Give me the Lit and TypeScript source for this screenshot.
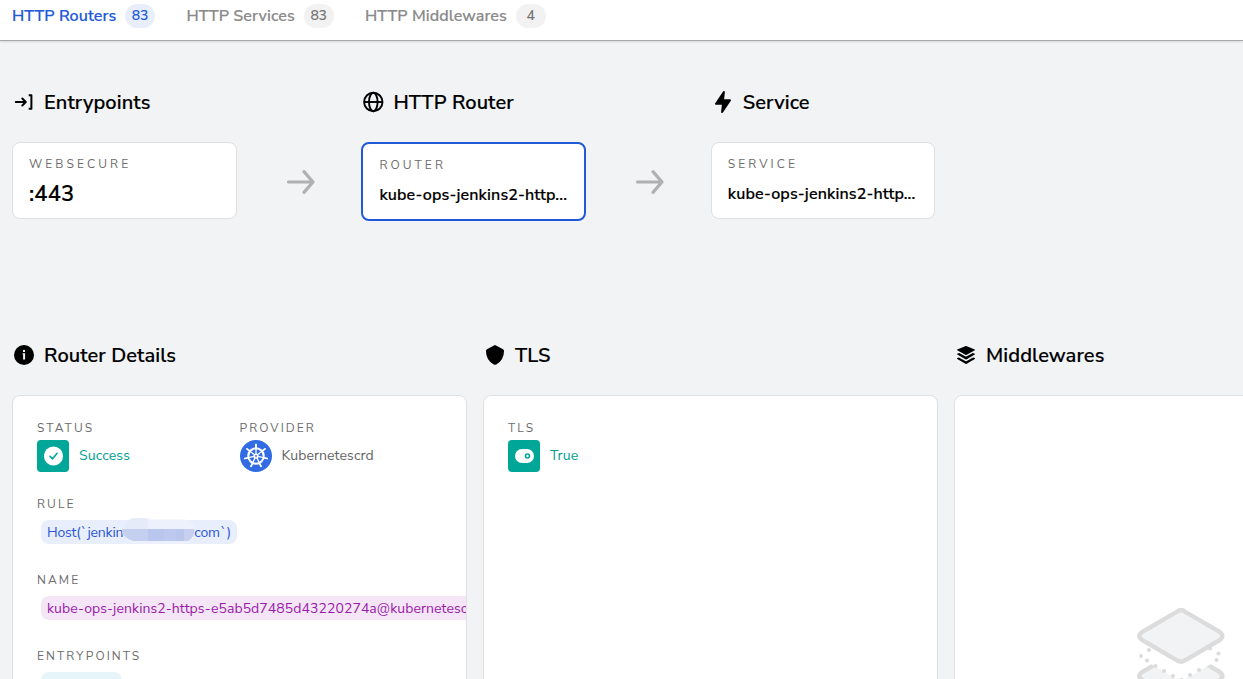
import { LitElement, html, svg, css } from "lit";
import { customElement, property } from "lit/decorators.js";

const eva = {
  flash: svg`<path d="M11.11 23a1 1 0 0 1-.34-.06 1 1 0 0 1-.65-1.05l.77-7.09H5a1 1 0 0 1-.83-1.56l7.89-11.8a1 1 0 0 1 1.17-.38 1 1 0 0 1 .65 1l-.77 7.14H19a1 1 0 0 1 .83 1.56l-7.89 11.8a1 1 0 0 1-.83.44z"/>`,
  info: svg`<circle cx="12" cy="12" r="10"/><g fill="#f1f3f5"><circle cx="12" cy="7.9" r="1.2"/><path d="M10.6 10.3H13.1V16.6H11.1V11.6H10.6Z"/></g>`,
  shield: svg`<path d="M12 21.85a2 2 0 0 1-1-.25l-.3-.17A15.17 15.17 0 0 1 3 8.23v-.14a2 2 0 0 1 1-1.75l7-3.94a2 2 0 0 1 2 0l7 3.94a2 2 0 0 1 1 1.75v.14a15.17 15.17 0 0 1-7.72 13.2l-.3.17a2 2 0 0 1-.98.25z"/>`,
  layers: svg`<path d="M3.24 7.29l8.52 4.63a.51.51 0 0 0 .48 0l8.52-4.63a.44.44 0 0 0-.05-.81L12.19 3a.5.5 0 0 0-.38 0L3.29 6.48a.44.44 0 0 0-.05.81z"/><path d="M20.71 10.66l-1.83-.78-6.64 3.61a.51.51 0 0 1-.48 0L5.12 9.88l-1.83.78a.48.48 0 0 0 0 .85l8.52 4.9a.46.46 0 0 0 .48 0l8.52-4.9a.48.48 0 0 0-.1-.85z"/><path d="M20.71 15.1l-1.56-.68-6.91 3.76a.51.51 0 0 1-.48 0l-6.91-3.76-1.56.68a.49.49 0 0 0 0 .87l8.52 5a.51.51 0 0 0 .48 0l8.52-5a.49.49 0 0 0-.1-.87z"/>`,
  entry: svg`<g fill="none" stroke="#000" stroke-width="2" stroke-linejoin="round"><path stroke-linecap="round" d="M3.8 12H13.4M10.3 8.5L13.8 12L10.3 15.5"/><path d="M16.7 5.3H19.4V18.7H16.7"/></g>`,
  globe: svg`<g fill="none" stroke="#000" stroke-width="1.9"><circle cx="12.3" cy="12" r="9.2"/><ellipse cx="12.3" cy="12" rx="4.3" ry="9.2"/><path d="M3 12H21.6"/></g>`,
};

@customElement("section-title")
class SectionTitle extends LitElement {
  @property() icon: keyof typeof eva = "info";
  static styles = css`
    :host { display: flex; align-items: center; gap: 8px; height: 24px; font-size: 20px; font-weight: 600; letter-spacing: .08px; color: #000; -webkit-text-stroke: .12px #000; white-space: nowrap; }
    svg { width: 24px; height: 24px; flex: none; }
  `;
  render() {
    return html`<svg viewBox="0 0 24 24">${eva[this.icon]}</svg><span><slot></slot></span>`;
  }
}

const arrow = html`<svg class="arrow" width="30" height="28" viewBox="0 0 30 28"><path d="M2.5 14H27M18 3.6L27 14L18 24.4" fill="none" stroke="#b0b0b0" stroke-width="3.2" stroke-linecap="round" stroke-linejoin="round"/></svg>`;

const spokes = [0, 1, 2, 3, 4, 5, 6].map((i) => (i * 360) / 7);
const helm = html`<svg width="32" height="32" viewBox="0 0 32 32">
  <circle cx="16" cy="16" r="16" fill="#326ce5"/>
  <g fill="none" stroke="#fff">
    <circle cx="16" cy="16" r="7.7" stroke-width="2.1"/>
    ${spokes.map((a) => svg`<path transform="rotate(${a} 16 16)" d="M16 14V4.2" stroke-width="1.3"/>`)}
    ${spokes.map((a) => svg`<path transform="rotate(${a} 16 16)" d="M16 7.4V4.4" stroke-width="1.6" stroke-linecap="round"/>`)}
  </g>
  <circle cx="16" cy="16" r="2.6" fill="#fff"/><circle cx="16" cy="16" r="0.9" fill="#326ce5"/>
</svg>`;

const check = html`<svg width="32" height="32" viewBox="0 0 32 32"><rect width="32" height="32" rx="4" fill="#00a697"/><circle cx="16.5" cy="16" r="9.6" fill="#fff"/><path d="M13 16.3L15.6 18.8L20.1 13.3" fill="none" stroke="#00a697" stroke-width="1.6" stroke-linecap="round" stroke-linejoin="round"/></svg>`;
const toggle = html`<svg width="32" height="32" viewBox="0 0 32 32"><rect width="32" height="32" rx="4" fill="#00a697"/><rect x="7" y="9" width="19" height="14" rx="7" fill="#fff"/><circle cx="19.5" cy="16" r="2" fill="none" stroke="#00a697" stroke-width="1.6"/></svg>`;

const mosaic = html`<svg class="mosaic" width="74" height="26" viewBox="0 0 74 26">
  <path d="M3 9Q5 0 12 0H24Q27 0 28 1.5H62Q73 3 73 14Q72 25 62 25.5H14Q2 24 0 14Z" fill="#edf1fb"/>
  <path d="M4 5Q7 0 14 0H24L26 2V11H2Z" fill="#e5ebf8"/>
  <path d="M0 11H26V23H12Q4 22 0 14Z" fill="#c5cff0"/>
  <path d="M26 11H62V23H26Z" fill="#b9c6ee"/><path d="M42 11H54V23H42Z" fill="#bdc9ef"/>
  <path d="M62 11H72.5Q73 19 66 23H62Z" fill="#c7d0f0"/>
</svg>`;

const diamond = "M40 5.3Q45 0.6 50 5.3L84 25.2Q89 29 84 32.8L50 52.8Q45 56.6 40 52.8L6 32.8Q0.5 29 6 25.2Z";
const dots = [[13, 43], [5, 49], [11, 53.5], [19.5, 59], [28, 64], [37, 69], [45.5, 73], [54, 68], [63, 63], [80.5, 53], [82.5, 46.5], [74, 41.5]];
const stack = html`<svg class="stack" width="90" height="102" viewBox="0 0 90 102">
  <g fill="#f1f3f5" stroke="#dcdcdc" stroke-width="4.4"><path d=${diamond} transform="translate(0 40)"/></g>
  <path d=${diamond} transform="translate(0 19)" fill="#fff"/>
  ${dots.map(([x, y]) => svg`<circle cx=${x} cy=${y} r="2.1" fill="#dcdcdc"/>`)}
  <path d=${diamond} fill="#f1f3f5" stroke="#dcdcdc" stroke-width="4.4"/>
</svg>`;

@customElement("app-root")
class AppRoot extends LitElement {
  static styles = css`
    :host { display: block; height: 679px; overflow: hidden; background: #f1f3f5; font-family: "Nunito Sans", Nunito, Lato, sans-serif; color: #000; }
    * { box-sizing: border-box; }
    svg { display: block; flex: none; }
    .tabs { display: flex; gap: 31.4px; height: 41px; padding: 4px 12px 0; background: #fff; border-bottom: 1px solid #a8a8a8; box-shadow: 0 1px 2px rgba(0,0,0,.12); }
    .tab { display: flex; align-items: center; gap: 8.8px; height: 24px; font-size: 16px; font-weight: 600; letter-spacing: .08px; color: #8a8a8a; -webkit-text-stroke: .15px currentColor; white-space: nowrap; }
    .count { width: 30px; height: 24px; line-height: 23px; border-radius: 12px; text-align: center; font-size: 14px; letter-spacing: -.2px; -webkit-text-stroke: 0; background: #f2f2f2; color: #757575; }
    .tab.active { color: #2159d8; }
    .active .count { background: #e8eefc; color: #2159d8; }
    .flow { display: grid; grid-template-columns: 224.7px 124.7px 224.7px 124.7px 224.3px; grid-template-rows: 24px 79px; row-gap: 28px; align-items: start; padding: 49px 0 0 12px; }
    .arrow { margin: 26px 0 0 49.4px; }
    .node { height: 77px; padding: 13px 16px 0; background: #fff; border: 1px solid #dfe0e2; border-radius: 8px; }
    .node.current { height: 79px; border: 2px solid #2159d8; }
    .kind { height: 16px; line-height: 16px; font-size: 12px; letter-spacing: 3.08px; color: #6c6c6c; }
    .name { margin-top: 10px; height: 24px; line-height: 24px; font-size: 16px; font-weight: 600; letter-spacing: .14px; -webkit-text-stroke: .15px #000; white-space: nowrap; }
    .name.port { font-size: 22px; }
    .details { display: grid; grid-template-columns: repeat(3, 455px); column-gap: 16px; row-gap: 28px; padding: 122px 0 0 12px; }
    .card { height: 300px; padding: 24px; overflow: hidden; background: #fff; border: 1px solid #dfe0e2; border-radius: 8px; }
    .pair { display: grid; grid-template-columns: 202.5px 1fr; }
    .label { height: 16px; line-height: 16px; font-size: 12px; letter-spacing: 2.08px; color: #6c6c6c; }
    .value { display: flex; align-items: center; gap: 10px; height: 32px; margin-top: 4px; font-size: 14px; letter-spacing: .09px; color: #636363; }
    .value span { padding-bottom: 2px; }
    .value.ok { color: #00a08f; letter-spacing: .14px; }
    .field { margin-top: 28px; }
    .pair + .field { margin-top: 24px; }
    .chip { display: flex; align-items: center; width: max-content; min-width: 81px; height: 24px; margin: 8px 0 0 4px; padding: 0 6px; border-radius: 8px; font-size: 14px; white-space: nowrap; }
    .chip.rule { background: #e8eefc; color: #2b56d6; letter-spacing: -.17px; }
    .chip.id { background: #f4e6f7; color: #9a1aa8; letter-spacing: .08px; }
    .chip.entry { background: #e6f5f9; color: #0d8aa8; }
    .mosaic { height: 26px; margin: -2px -2px 0 -1px; }
    .stack { margin: 187px auto 0; position: relative; left: -.5px; }
  `;

  render() {
    return html`
      <nav class="tabs">
        <div class="tab active">HTTP Routers<span class="count">83</span></div>
        <div class="tab">HTTP Services<span class="count">83</span></div>
        <div class="tab">HTTP Middlewares<span class="count">4</span></div>
      </nav>
      <section class="flow">
        <section-title icon="entry">Entrypoints</section-title><i></i>
        <section-title icon="globe">HTTP Router</section-title><i></i>
        <section-title icon="flash">Service</section-title>
        <div class="node"><div class="kind">WEBSECURE</div><div class="name port">:443</div></div>
        ${arrow}
        <div class="node current"><div class="kind">ROUTER</div><div class="name">kube-ops-jenkins2-http...</div></div>
        ${arrow}
        <div class="node"><div class="kind">SERVICE</div><div class="name">kube-ops-jenkins2-http...</div></div>
      </section>
      <section class="details">
        <section-title icon="info">Router Details</section-title>
        <section-title icon="shield">TLS</section-title>
        <section-title icon="layers">Middlewares</section-title>
        <div class="card">
          <div class="pair">
            <div><div class="label">STATUS</div><div class="value ok">${check}<span>Success</span></div></div>
            <div><div class="label">PROVIDER</div><div class="value">${helm}<span>Kubernetescrd</span></div></div>
          </div>
          <div class="field"><div class="label">RULE</div><div class="chip rule">Host(\`jenkin${mosaic}com\`)</div></div>
          <div class="field"><div class="label">NAME</div><div class="chip id">kube-ops-jenkins2-https-e5ab5d7485d43220274a@kubernetescrd</div></div>
          <div class="field"><div class="label">ENTRYPOINTS</div><div class="chip entry"></div></div>
        </div>
        <div class="card"><div class="label">TLS</div><div class="value ok">${toggle}<span>True</span></div></div>
        <div class="card">${stack}</div>
      </section>
    `;
  }
}
